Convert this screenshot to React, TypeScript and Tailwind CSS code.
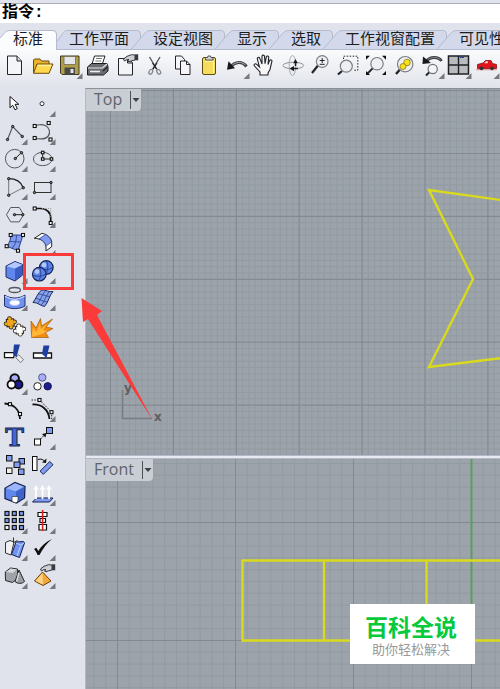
import { useState } from "react";
import type { ReactNode } from "react";

type Tool = {
  label: string;
  more?: boolean;
  icon: ReactNode;
};

const INK = "#222429";
const THIN = "#55585f";
const BLUE = "#7f9cf0";

const Node = ({ x, y, s = 3 }: { x: number; y: number; s?: number }) => (
  <rect
    x={x - s / 2}
    y={y - s / 2}
    width={s}
    height={s}
    fill="#fff"
    stroke="#111"
    strokeWidth="1.1"
  />
);

const Dot = ({ x, y }: { x: number; y: number }) => (
  <circle cx={x} cy={y} r="1.2" fill="#777" stroke="#111" strokeWidth="0.9" />
);

const Hand = () => (
  <>
    <path
      d="M12.5 8 16 5.3l4.5-1.6L24 4v5l-3.500.8-2.500 1-1.500-.8 1.500-1.300-2.200-.1-2.300 1.400Z"
      fill="#cfd0d4"
      stroke={INK}
      strokeWidth="0.9"
    />
    <path d="M24 3.300h3.200v6H24Z" fill="#3a3b40" />
  </>
);

const Puzzle = ({ x, y, fill }: { x: number; y: number; fill: string }) => {
  const knobs = [
    [-0.8, -4.2],
    [4.2, -1],
    [0.8, 4.2],
    [-4.2, 1],
  ];
  return (
    <g transform={`translate(${x} ${y})`}>
      {knobs.map(([kx, ky]) => (
        <circle key={kx} cx={kx} cy={ky} r="2.4" fill="#2b2416" />
      ))}
      <path d="M-4.6-3.700 3.700-4.600 4.600 3.700-3.700 4.600Z" fill="#2b2416" />
      {knobs.map(([kx, ky]) => (
        <circle key={kx} cx={kx} cy={ky} r="1.6" fill={fill} />
      ))}
      <path d="M-3.500-2.800 2.800-3.500 3.500 2.800-2.800 3.500Z" fill={fill} />
    </g>
  );
};

const mainTools: Tool[] = [
  {
    label: "新建",
    icon: (
      <>
        <path d="M7.5 5H17l4.5 5v13.5h-14Z" fill="#f4f5f7" stroke={INK} />
        <path d="M17 5v5h4.5" fill="#d5d6da" stroke={INK} />
      </>
    ),
  },
  {
    label: "打开",
    icon: (
      <>
        <path d="M5.5 22V9l1-1H12l1.5 2H21v3" fill="#e9b32a" stroke="#6b4d0c" />
        <path d="M5.5 22.3 9 13h16l-4 9.3Z" fill="#ffd84f" stroke="#6b4d0c" />
        <path d="M10 14.5h13" stroke="#fff0a8" strokeWidth="1.5" />
      </>
    ),
  },
  {
    label: "保存",
    more: true,
    icon: (
      <>
        <path d="M5.5 5H24v18.5H7L5.5 22Z" fill="#b09f48" stroke="#3d3924" />
        <path d="M9 5.5h11.5v8H9Z" fill="#e3e6ea" stroke="#6e6845" strokeWidth="0.8" />
        <path d="M9.5 16.5h10.5v7H9.5Z" fill="#4a4b48" />
        <path d="M15.5 18h3v4h-3Z" fill="#e4e5e8" />
      </>
    ),
  },
  {
    label: "打印",
    icon: (
      <>
        <path d="m9 13 2.500-8H22l-3 9" fill="#fff" stroke={INK} />
        <path d="M13 7.500h6M12.300 10h6" stroke="#777" />
        <path d="m4.500 16 4-3.500H24l1 3V20l-4.500 4h-16Z" fill="#6b6d72" stroke="#1c1d20" />
        <path d="M5 17h14.500l4.500-4" stroke="#e5e6e8" strokeWidth="1.2" />
        <path d="M7 20.500h10" stroke="#eee" strokeWidth="1.6" />
        <path d="m20 20 4.500-4" stroke="#222" strokeWidth="1.2" />
      </>
    ),
  },
  {
    label: "文件属性",
    icon: (
      <>
        <path d="M7.500 7.500h9l5 4v12.500h-14Z" fill="#f3f4f6" stroke={INK} />
        <path d="M21.500 12h-5V9" stroke={INK} />
        <Hand />
      </>
    ),
  },
  {
    label: "剪切",
    icon: (
      <>
        <path d="m10.500 6 7.500 12.500M21 6l-7.500 12.500" stroke={THIN} strokeWidth="1.4" />
        <path d="m13.500 12 4 6M18 12l-4 6" stroke={INK} strokeWidth="1.2" />
        <ellipse cx="11.800" cy="20.800" rx="1.700" ry="2.500" stroke="#85888e" strokeWidth="1.3" transform="rotate(30 11.8 20.8)" />
        <ellipse cx="19.700" cy="20.800" rx="1.700" ry="2.500" stroke="#85888e" strokeWidth="1.3" transform="rotate(-30 19.7 20.8)" />
      </>
    ),
  },
  {
    label: "复制",
    icon: (
      <>
        <path d="M8.500 5h6l3 3.500V18h-9Z" fill="#f6f6f8" stroke={INK} />
        <path d="M13.500 10h6l3.500 3.500v10h-9.500Z" fill="#f6f6f8" stroke={INK} />
        <path d="M19.500 10v3.500H23" stroke={INK} />
      </>
    ),
  },
  {
    label: "粘贴",
    icon: (
      <>
        <rect x="8.500" y="6.500" width="13" height="17" rx="1.5" fill="#f5dc5c" stroke="#5b4c14" />
        <path d="M11 10.500h8.500v11" stroke="#fff3a5" />
        <path d="M11.500 9V6.500h2L14 5h2.500l.5 1.500h2V9Z" fill="#d4d5d8" stroke="#45464a" strokeWidth="0.9" />
      </>
    ),
  },
  {
    label: "撤销",
    more: true,
    icon: (
      <>
        <path d="M9 15.500c4-4.800 11-6 15.500 0" stroke="#3d3f45" strokeWidth="3" />
        <path d="M10 14.500c4-3.800 9.500-4.300 13.500-.5" stroke="#a9acb2" strokeWidth="1" />
        <path d="m5 18.800 1.500-8.500 6.500 7Z" fill="#17181b" />
      </>
    ),
  },
  {
    label: "平移",
    icon: (
      <path
        d="M10 24v-3l-5.500-6c-1-1.500.5-3 2-1.800l3 2.800-2.200-8c-.3-1.800 2-2.200 2.500-.6L12 13V5.300c0-1.600 2.400-1.600 2.500 0l.5 7.400 1.300-6.800c.4-1.500 2.600-1 2.400.5l-.7 7.200 1.600-4c.6-1.400 2.700-.7 2.300.8L20 18.500 18 22v2Z"
        fill="#f7f7f8"
        stroke={INK}
        strokeWidth="1.1"
      />
    ),
  },
  {
    label: "旋转视图",
    icon: (
      <>
        <ellipse cx="15.300" cy="14.500" rx="10.300" ry="3.300" stroke="#8f9298" />
        <ellipse cx="14.500" cy="14.500" rx="3.300" ry="10" stroke="#a5a8ad" />
        <path d="m11.500 17.600 4.500-2.600v5.200ZM17.500 8l2.300 4.300h-4.600Z" fill="#17181b" />
        <path d="M16 17.600h4M17.500 12v3" stroke="#222" strokeWidth="1.5" />
      </>
    ),
  },
  {
    label: "动态缩放",
    icon: (
      <>
        <path d="m13 14.500-6 7.500" stroke={INK} strokeWidth="2.2" />
        <circle cx="17.200" cy="10.500" r="5.8" fill="#f0f1f3" stroke="#7b7e84" strokeWidth="1.2" />
        <path d="M14.700 9.500h5M17.200 7v5M14.700 13.300h5" stroke={INK} />
      </>
    ),
  },
  {
    label: "框选缩放",
    icon: (
      <>
        <path d="M10.500 8V5.200h14.300v14H20" stroke={INK} strokeDasharray="1.5 1.5" />
        <path d="m9 20-4 3.500" stroke={INK} strokeWidth="2.2" />
        <circle cx="13.300" cy="15.200" r="6" fill="#eeeff2" stroke="#7b7e84" strokeWidth="1.2" />
      </>
    ),
  },
  {
    label: "缩放至最大范围",
    icon: (
      <>
        <path d="m12 17-6 6" stroke={INK} strokeWidth="1.8" />
        <circle cx="16" cy="12.700" r="6.2" fill="#eeeff2" stroke="#7b7e84" strokeWidth="1.2" />
        <path d="M5 4.700h4l-4 4ZM25 4.700h-4l4 4ZM5 24v-4l4 4ZM25 24v-4l-4 4Z" fill="#111" />
      </>
    ),
  },
  {
    label: "缩放至选取物体",
    icon: (
      <>
        <path d="m11 18.500-4 4.500" stroke={INK} strokeWidth="2.4" />
        <circle cx="16.200" cy="13.200" r="7.7" fill="#eeeff2" stroke="#7b7e84" strokeWidth="1.2" />
        <circle cx="18" cy="11.500" r="3.3" fill="#f7e01c" stroke="#8b7a11" strokeWidth="0.8" />
        <circle cx="14" cy="15.500" r="3" fill="#f7e01c" stroke="#8b7a11" strokeWidth="0.8" />
      </>
    ),
  },
  {
    label: "复原视图",
    more: true,
    icon: (
      <>
        <path d="M9 10.500c4-5 12-5.500 15.500-.5" stroke="#3d3f45" strokeWidth="3" />
        <path d="M11 8.500c4-2.800 9-2.800 12.500 0" stroke="#85888e" />
        <path d="m5.500 13 .5-7.500 8 6.500Z" fill="#17181b" />
        <path d="m12.500 21-3.500 3.500" stroke={INK} strokeWidth="2" />
        <circle cx="15.700" cy="18" r="4.600" fill="#f4f4f6" stroke="#6e7177" strokeWidth="1.2" />
      </>
    ),
  },
  {
    label: "四个视图",
    more: true,
    icon: (
      <>
        <rect x="4.500" y="5" width="20" height="18" fill="#b9bbbf" stroke="#1f2024" strokeWidth="1.5" />
        <path d="M14.500 5v18M4.500 14h20" stroke="#1f2024" strokeWidth="1.4" />
        <path d="M16 6.500h4" stroke="#2f3fb5" />
      </>
    ),
  },
  {
    label: "着色",
    more: true,
    icon: (
      <>
        <path d="M4 18.800h21" stroke="#e59a9a" />
        <path d="M5.500 13.500 11 12l2.500-2.500H19l1.500 3 4 1v4l-19 .2Z" fill="#e0151b" stroke="#8d0d12" strokeWidth="0.8" />
        <path d="m12 12.300 2-2h1.800v2Z" fill="#f6d9d9" />
        <circle cx="9.500" cy="17.300" r="1.9" fill="#333" />
        <circle cx="20" cy="17.300" r="1.9" fill="#333" />
      </>
    ),
  },
];

const sideTools: Tool[] = [
  {
    label: "取消选取",
    icon: <path d="M10 7.500v11.300l2.700-2.500 2.300 4.500 2.300-1.200-2.200-4.300h3.700Z" fill="#fff" stroke="#111" />,
  },
  {
    label: "点",
    more: true,
    icon: <circle cx="14" cy="14.700" r="2" fill="#fff" stroke="#333" />,
  },
  {
    label: "多重直线",
    more: true,
    icon: (
      <>
        <path d="m7.500 22.500 5.200-13 9.600 10" stroke={THIN} strokeWidth="1.2" />
        <Dot x={7.5} y={22.5} />
        <Dot x={12.7} y={9.5} />
        <Dot x={22.3} y={19.5} />
      </>
    ),
  },
  {
    label: "控制点曲线",
    more: true,
    icon: (
      <>
        <path d="M6.700 9c2-1.200 7-2 10.500-.5 4.500 2 5.500 7.500 3 10.500-2.500 3-8 3.500-13.500 2" stroke={THIN} strokeWidth="1.2" />
        <Node x={6.7} y={9} />
        <Node x={20.7} y={6} />
        <Node x={6.7} y={21} />
        <Node x={22.5} y={22.5} />
      </>
    ),
  },
  {
    label: "圆",
    more: true,
    icon: (
      <>
        <circle cx="14.700" cy="14.700" r="9.3" stroke={THIN} />
        <path d="m15.300 14.500 6-5.800" stroke="#222" />
        <Dot x={15.3} y={14.5} />
        <Dot x={21.5} y={8.7} />
      </>
    ),
  },
  {
    label: "椭圆",
    more: true,
    icon: (
      <>
        <ellipse cx="14.700" cy="15" rx="9.300" ry="6.700" stroke={THIN} />
        <path d="M14.700 8.500V15h9" stroke="#222" />
        <Node x={14.7} y={8.5} s={2.5} />
        <Node x={14.7} y={15} s={2.5} />
        <Node x={23.5} y={15} s={2.5} />
      </>
    ),
  },
  {
    label: "圆弧",
    more: true,
    icon: (
      <>
        <path d="M8.700 6.700c7 0 12.300 3.300 14.600 9" stroke="#222" strokeWidth="1.3" />
        <path d="M8.700 6.700v16.600l14.600-7.600" stroke="#777" />
        <Dot x={8.7} y={6.7} />
        <Dot x={8.7} y={23.3} />
        <Dot x={23.3} y={15.7} />
      </>
    ),
  },
  {
    label: "矩形",
    more: true,
    icon: (
      <>
        <rect x="6.500" y="10.500" width="16.500" height="10" stroke="#333" />
        <Dot x={6.5} y={20.5} />
        <Dot x={23} y={10.5} />
      </>
    ),
  },
  {
    label: "多边形",
    more: true,
    icon: (
      <>
        <path d="m6.500 14.700 4.200-7.200h8.600l4.200 7.200-4.200 7.200h-8.600Z" stroke={THIN} />
        <path d="M15 14.700h8" stroke="#222" />
        <Dot x={14.5} y={14.7} />
        <Dot x={22.8} y={14.7} />
      </>
    ),
  },
  {
    label: "曲线圆角",
    more: true,
    icon: (
      <>
        <path d="M6.700 8.500h5.800c6 0 10.200 4 10.200 9.500v5" stroke="#111" strokeWidth="1.7" />
        <path d="M14 8.500h8.700V17" stroke="#999" strokeDasharray="1 1" />
        <Node x={6.7} y={8.5} />
        <Node x={22.7} y={23} />
      </>
    ),
  },
  {
    label: "曲面",
    icon: (
      <>
        <path d="M10.700 7H23l-5 15.700-11.300-4.500C9.500 15 11 11 10.700 7Z" fill={BLUE} stroke="#2f3f86" />
        <path d="M16.500 7c0 5-1 9.500-4 13M9.500 13.500l11.500.5" stroke="#3b4f9e" />
        <Node x={10.7} y={7} />
        <Node x={23} y={7} />
        <Node x={6.7} y={18.2} />
        <Node x={18} y={22.7} />
      </>
    ),
  },
  {
    label: "放样",
    more: true,
    icon: (
      <>
        <path d="m6.300 10.300 7.700-5c5 1 9 4 9.700 8.700v4.700L18 23v-4c-.5-5.500-5-8.500-11.700-8.700Z" fill="#fff" stroke="#222" />
        <path d="m11 10.800 6.500-4.300c3 1.500 5.300 4 6 7.500L18 18c-.8-3.500-3.500-6-7-7.200Z" fill={BLUE} stroke="#2f3f86" strokeWidth="0.7" />
      </>
    ),
  },
  {
    label: "立方体",
    more: true,
    icon: (
      <>
        <path d="m6 10 9-4.500 7.700 3V19L15 25l-9-4Z" fill="#5f86ea" stroke="#1d2b66" />
        <path d="m6.500 10.200 8.700-4.200 7 2.700-7.200 3.800Z" fill="#b5c7ff" />
        <path d="m15 12.800 7.300-3.900v9.900L15 24.400Z" fill="#3a5cc4" />
      </>
    ),
  },
  {
    label: "球体",
    more: true,
    icon: (
      <>
        <circle cx="18.300" cy="11.500" r="6.800" fill="#5b82e8" stroke="#152352" strokeWidth="1.2" />
        <path d="M11.700 12.700c4 1.600 9 1.300 13-1M18.500 5c2 4 1.500 9-.5 13" stroke="#22367c" strokeWidth="0.800" />
        <circle cx="16" cy="9" r="2.400" fill="#b4c8ff" />
        <circle cx="11.300" cy="18.200" r="6.800" fill="#5b82e8" stroke="#152352" strokeWidth="1.2" />
        <path d="M4.700 19.300c4 1.600 9 1.300 13-1M11.500 11.700c2 4 1.500 9-.5 13" stroke="#22367c" strokeWidth="0.800" />
        <circle cx="9" cy="15.700" r="2.400" fill="#b4c8ff" />
      </>
    ),
  },
  {
    label: "从曲面偏移",
    more: true,
    icon: (
      <>
        <ellipse cx="14.700" cy="7" rx="5.700" ry="2.500" stroke={THIN} strokeWidth="1.3" />
        <path d="M4.500 12c6 4 14.500 4 20.500 0v11c-6 3.500-14.500 3.500-20.500 0Z" fill="#6f92ee" stroke="#23336f" />
        <path d="M5 13.300c6 3.700 13.500 3.700 19.500 0" stroke="#c3d2ff" strokeWidth="1.3" />
        <ellipse cx="14.700" cy="19.700" rx="5" ry="2.700" fill="#fff" stroke="#b7c6fb" />
      </>
    ),
  },
  {
    label: "网格",
    more: true,
    icon: (
      <>
        <path d="M5 19.500c3-4 4.500-9 8.500-12.500 4-.5 7.500 2.500 11.500 1.500-4 4-4.500 11-8.500 15-4-.5-7-4.500-11.500-4Z" fill="#86a3f0" stroke="#1e2c66" />
        <path d="M17.500 7.800c-3.500 4-5 9.500-8 13M21 9c-3.500 4-4.500 10-8 13.500M7.700 15.500c4 0 7 3.500 11.300 3.500M10.500 11c4 0 7 2.500 11.500 2.500" stroke="#2c3d80" strokeWidth="0.800" />
      </>
    ),
  },
  {
    label: "组合",
    icon: (
      <>
        <Puzzle x={19.5} y={19} fill="#fff" />
        <Puzzle x={10.3} y={11.8} fill="#f2a71b" />
      </>
    ),
  },
  {
    label: "炸开",
    icon: (
      <>
        <path d="M3.500 26.500 3 10l5 7 4.500-9.500L13.500 15 24.500 8 18 16l7 1.500-7.500 4 3 5Z" fill="#f08c12" stroke="#a35c06" strokeWidth="0.7" />
        <path d="m3.500 26 1.500-9.500L8.500 21l3.500-9.500.8 6.500 7-5.500-5 6.500 4.500 1-5 3Z" fill="#ffb63a" />
      </>
    ),
  },
  {
    label: "修剪",
    icon: (
      <>
        <path d="M4.500 13.700H15l-1.500 5h-9Z" fill="#fff" stroke="#111" strokeWidth="1.3" />
        <path d="m15.700 18.500 3-2.700 4.800 5-3 2.700Z" fill="#eee" stroke="#777" />
        <path d="M14 5.500h6l-3.500 12.800-3.500-3Z" fill="#1f3f9e" />
      </>
    ),
  },
  {
    label: "分割",
    icon: (
      <>
        <path d="M5.500 14h18v5h-18Z" fill="#fff" stroke="#111" strokeWidth="1.3" />
        <path d="M15.500 6.500h6L18.500 19 14 15Z" fill="#1f3f9e" />
      </>
    ),
  },
  {
    label: "群组",
    more: true,
    icon: (
      <>
        <circle cx="14.700" cy="11.500" r="4.200" fill="#a9acf6" stroke="#0c0c12" strokeWidth="2" />
        <circle cx="18.500" cy="17.500" r="4" fill="#1d1d8e" stroke="#0c0c12" strokeWidth="1.8" />
        <circle cx="11.500" cy="17.500" r="4" fill="#fff" stroke="#0c0c12" strokeWidth="1.8" />
      </>
    ),
  },
  {
    label: "解散群组",
    icon: (
      <>
        <circle cx="14.300" cy="10.500" r="3.700" fill="#a9acf6" stroke="#555a8c" />
        <circle cx="9.500" cy="19.300" r="3.700" fill="#fff" stroke="#222" />
        <circle cx="19.700" cy="19.300" r="3.700" fill="#1d1d8e" stroke="#15155c" />
      </>
    ),
  },
  {
    label: "编辑点",
    icon: (
      <>
        <path d="M4.500 9.500c9 .5 15 6 15.500 15.500" stroke="#111" strokeWidth="1.8" />
        <Node x={10} y={10.2} />
        <Node x={20} y={20} />
      </>
    ),
  },
  {
    label: "控制点",
    more: true,
    icon: (
      <>
        <path d="M4.500 10.500c9-.5 16 5 17 14.500" stroke="#111" strokeWidth="1.8" />
        <path d="M3.500 6h8l12.200 12.200V25" stroke="#222" strokeDasharray="1.5 1.3" />
        <Node x={11.5} y={6} />
        <Node x={23.5} y={18.2} />
      </>
    ),
  },
  {
    label: "文字",
    icon: (
      <text
        x="14.500"
        y="24"
        textAnchor="middle"
        fill="#4169d8"
        stroke="#1a2550"
        strokeWidth="1"
        className="font-['DejaVu_Serif',serif] text-[25px] font-bold"
      >
        T
      </text>
    ),
  },
  {
    label: "移动",
    more: true,
    icon: (
      <>
        <path d="m12.500 17 4-4" stroke="#111" strokeDasharray="2 1" />
        <path d="m18.500 11-1 4.500-3.500-3.500Z" fill="#111" />
        <rect x="18.500" y="5.500" width="6" height="6" fill={BLUE} stroke="#111" />
        <rect x="6.500" y="17" width="6" height="6" fill="#fff" stroke="#111" />
      </>
    ),
  },
  {
    label: "复制物件",
    icon: (
      <>
        <rect x="6.500" y="5.500" width="5.5" height="5.5" fill={BLUE} stroke="#111" />
        <rect x="19" y="8.500" width="5.5" height="5.5" fill={BLUE} stroke="#111" />
        <rect x="14" y="12" width="6" height="5.5" fill={BLUE} stroke="#111" />
        <rect x="6.500" y="18" width="5.5" height="5.5" fill="#f1efe6" stroke="#111" />
        <rect x="18.500" y="19" width="5.5" height="5.5" fill={BLUE} stroke="#111" />
      </>
    ),
  },
  {
    label: "旋转",
    icon: (
      <>
        <rect x="4.500" y="6.500" width="4.5" height="14" fill="#fff" stroke="#111" />
        <path d="M10 9.500c3-1 5 0 7 2" stroke="#111" />
        <path d="m18.500 8.500-.5 4.500-4-.5Z" fill="#111" />
        <path d="m21.800 11.500 3.200 3.200-9.700 9.700-3.300-3.200Z" fill={BLUE} stroke="#1c2756" />
      </>
    ),
  },
  {
    label: "布尔运算",
    more: true,
    icon: (
      <>
        <path d="M5 10.300 15 4.500l10 4-.5 11.500-8 5L5 20.500Z" fill="#5f87ec" stroke="#14204f" strokeWidth="1.3" />
        <path d="m6 10.300 9-5 8.800 3.500-8.300 4.500Z" fill="#9db6fa" />
        <path d="m15.800 13.700 8.400-4.600-.4 10.400-7.300 4.500Z" fill="#3e63c9" />
        <path d="M12 18.500h6V23l-2 2-4-1.500Z" fill="#fff" stroke="#333" strokeWidth="0.7" />
      </>
    ),
  },
  {
    label: "投影",
    more: true,
    icon: (
      <>
        <path d="m4.500 24 4-4H25l-3.500 4Z" fill={BLUE} stroke="#14204f" />
        <path d="M8 9v12M14.500 9v12M21 9v12" stroke="#fff" strokeWidth="1.7" />
        <path d="m8 7-2.700 4.500h5.400ZM14.500 7l-2.700 4.500h5.400ZM21 7l-2.700 4.500h5.400Z" fill="#fff" />
      </>
    ),
  },
  {
    label: "阵列",
    more: true,
    icon: (
      <>
        {[7, 14.3, 21.5].map((x) =>
          [7.5, 14.5, 21.5].map((y) => (
            <rect
              key={`${x}-${y}`}
              x={x - 2}
              y={y - 2}
              width="4"
              height="4"
              fill={x === 7 && y === 21.5 ? "#fff" : BLUE}
              stroke="#111"
              strokeWidth="1.2"
            />
          ))
        )}
      </>
    ),
  },
  {
    label: "对齐",
    more: true,
    icon: (
      <>
        <path d="M10 6.500h9v4h-9ZM12 12.500h5.500v4H12ZM11 18.500h7.500V24H11Z" fill="#fff" stroke="#111" strokeWidth="1.2" />
        <path d="M14.600 4v21" stroke="#e01c1c" strokeWidth="1.6" />
      </>
    ),
  },
  {
    label: "变形",
    more: true,
    icon: (
      <>
        <path d="m5.500 9.500 4.500-2 4 1.500-3 13-5.500-2Z" fill="#f0f0f2" stroke="#333" />
        <path d="M13.500 4.500v5l4-2" stroke="#333" />
        <path d="m16 9 7.500-.5 1 1.500-5 14.500-8-3Z" fill="#6f93f0" stroke="#14204f" />
        <path d="m16 10 5 2 3-2M20.700 12.500 17 23" stroke="#c4d2ff" />
      </>
    ),
  },
  {
    label: "检查",
    more: true,
    icon: (
      <path d="m6 16 2.300-1.300 2 3.300C13.500 13 18 8.500 24 6c-5 4-9 9.500-12.500 16h-2C8.700 19.500 7.500 17.500 6 16Z" fill="#111" />
    ),
  },
  {
    label: "着色显示",
    more: true,
    icon: (
      <>
        <path d="m5.300 11 5.200-4 7 1 .5 9-5.500 4.500-7-2Z" fill="#9fa2a8" stroke="#26272b" />
        <path d="m5.800 11 5-3.500 6.200 1-4.500 3.500Z" fill="#d6d8db" />
        <path d="m19 9 5.500 11.500c-2.500 2.500-7 2.500-9.500 0Z" fill="#9b9ea4" stroke="#26272b" />
        <path d="m18.700 12-2 8.500" stroke="#e3e4e6" strokeWidth="1.2" />
      </>
    ),
  },
  {
    label: "物件属性",
    more: true,
    icon: (
      <>
        <path d="m6.500 20 8-9 8.500 9-8 4.500Z" fill="#f2a83a" stroke="#6b4007" />
        <path d="m7.500 20 7-8 .5 11.500Z" fill="#ffd383" />
        <Hand />
      </>
    ),
  },
];

const tabs = ["标准", "工作平面", "设定视图", "显示", "选取", "工作视窗配置", "可见性"];

function ToolButton({ tool, className }: { tool: Tool; className: string }) {
  return (
    <button
      type="button"
      aria-label={tool.label}
      className={`flex items-center justify-center hover:bg-white/60 ${className}`}
    >
      <svg width="28" height="28" viewBox="0 0 28 28" fill="none" className="shrink-0">
        {tool.icon}
        {tool.more && <path d="M27.500 22v6h-6Z" fill="#77797e" />}
      </svg>
    </button>
  );
}

function CommandBar() {
  const [command, setCommand] = useState("");

  return (
    <div className="mt-[3px] flex h-5 items-center border-t border-[#a9acb5] bg-white pb-px pl-[2px] font-['Liberation_Mono','Noto_Sans_CJK_SC',monospace] text-base leading-4 text-black">
      <label htmlFor="command" className="font-bold">
        指令:
      </label>
      <input
        id="command"
        value={command}
        onChange={(e) => setCommand(e.target.value)}
        className="min-w-0 flex-1 bg-transparent outline-none"
      />
    </div>
  );
}

function TabEdge({ first }: { first: boolean }) {
  if (first) {
    return (
      <svg width="26" height="20" className="shrink-0" fill="none">
        <path d="M0 1h10q3 0 3 3v16H0Z" fill="#fbfcfd" />
        <path d="M13.500 20v-8l6-8.500Q21 1 24 1h2v19Z" fill="#d3d9ea" />
        <path d="M0 .5h10q3.500 0 3.500 3.500v16M13.500 12l6-8.500Q21 .5 24 .5h2" stroke="#b4bbcf" />
        <path d="M13.500 19.500H26" stroke="#b4bbcf" />
      </svg>
    );
  }
  return (
    <svg width="24" height="20" className="shrink-0" fill="none">
      <path d="M0 1h8q3.500 0 3.500 3v5L2 20H0Z" fill="#d3d9ea" />
      <path d="M2 20 15.500 3.500Q17.500 1 21 1h3v19Z" fill="#d3d9ea" />
      <path d="M0 .5h8q3.500 0 3.500 3.500v4M1.500 20l14-16.500Q18 .5 21 .5h3" stroke="#b4bbcf" />
      <path d="M0 19.500h24" stroke="#b4bbcf" />
    </svg>
  );
}

function TabBar() {
  const [active, setActive] = useState(0);

  return (
    <div role="tablist" className="mt-[7px] flex h-5 overflow-hidden">
      <svg width="13" height="20" className="shrink-0" fill="none">
        <path d="M0 8 5 2.500Q6.500 1 9 1h4v19H0Z" fill="#fbfcfd" />
        <path d="m0 8 5-5.500Q6.500.5 9 .5h4" stroke="#b4bbcf" />
      </svg>
      {tabs.map((tab, i) => (
        <div key={tab} className="flex shrink-0">
          <button
            type="button"
            role="tab"
            aria-selected={active === i}
            onClick={() => setActive(i)}
            className={`flex h-5 items-start border-t border-[#b4bbcf] text-[15px] leading-[14px] whitespace-nowrap text-[#1c1d20] ${
              i === 0 ? "bg-[#fbfcfd]" : "border-b bg-[#d3d9ea]"
            }`}
          >
            {tab}
          </button>
          <TabEdge first={i === 0} />
        </div>
      ))}
    </div>
  );
}

// grid lines repeat far enough to cover wide windows
function gridPath(origin: number[], step: number, extent = 3000) {
  let d = "";
  for (let x = origin[0] % step; x < extent; x += step) d += `M${x.toFixed(1)} 0V${extent}`;
  for (let y = origin[1] % step; y < extent; y += step) d += `M0 ${y.toFixed(1)}H${extent}`;
  return d;
}

type ViewportProps = {
  name: string;
  origin: number[];
  step: number;
  className: string;
  children: ReactNode;
};

function Viewport({ name, origin, step, className, children }: ViewportProps) {
  return (
    <section aria-label={name} className={`relative overflow-hidden bg-[#9ca3aa] ${className}`}>
      <svg className="absolute inset-0 h-full w-full" fill="none">
        <path d={gridPath(origin, step / 10)} stroke="#939ba2" strokeWidth="1" />
        <path d={gridPath(origin, step)} stroke="#858891" strokeWidth="1" />
        {children}
      </svg>
      <button
        type="button"
        className="absolute top-0 left-0 flex h-[22px] items-center rounded-br bg-[#c9cdd4] pl-2 font-['Open_Sans','Noto_Sans',sans-serif] text-base leading-5 text-[#5f646b]"
      >
        <span className="pb-[2px]">{name}</span>
        <span className="ml-2 h-[18px] w-px bg-[#4c4f55]" />
        <svg width="10" height="6" className="shrink-0">
          <path d="M1.500 1h7L5 5Z" fill="#3e4147" />
        </svg>
      </button>
    </section>
  );
}

export default function App() {
  return (
    <div className="relative flex min-h-screen flex-col overflow-hidden bg-[#e0e3eb] font-['Noto_Sans_CJK_SC',sans-serif]">
      <CommandBar />
      <TabBar />

      <div
        role="toolbar"
        aria-label="标准"
        className="flex h-[38px] bg-linear-to-b from-[#fafbfc] to-[#e0e3eb] pt-px"
      >
        {mainTools.map((tool) => (
          <ToolButton key={tool.label} tool={tool} className="h-7 min-w-0 shrink basis-7" />
        ))}
      </div>

      <main className="flex flex-1">
        <aside className="w-[85px] shrink-0 pt-px">
          <div className="grid h-[500px] w-14 auto-rows-fr grid-cols-2">
            {sideTools.map((tool) => (
              <ToolButton key={tool.label} tool={tool} className="min-h-0" />
            ))}
          </div>
        </aside>

        <div className="flex min-w-0 flex-1 flex-col border-t border-l border-t-[#8c909a] border-l-[#b3b9c6]">
          <Viewport name="Top" origin={[24.5, 64.5]} step={62.9} className="flex-[366]">
            <path d="M36.500 301v28.500H66" stroke="#7b7d82" strokeWidth="1.5" />
            <text x="38" y="303" fill="#5c5e63" className="font-['DejaVu_Sans',sans-serif] text-[12px] font-bold">
              y
            </text>
            <text x="68" y="332" fill="#5c5e63" className="font-['DejaVu_Sans',sans-serif] text-[12px] font-bold">
              x
            </text>
            <path d="m480 120-137-19 44 89-44 88 137-17" stroke="#d9da1c" strokeWidth="2.4" />
          </Viewport>

          <div className="h-1 border-y border-[#b4b8c8] bg-[#e8eaf2]" />

          <Viewport name="Front" origin={[31.5, 63.5]} step={118} className="flex-[230]">
            <path d="M385.500 0v181" stroke="#5a9c62" strokeWidth="2" />
            <path
              d="M155.500 101.500h1000M155.500 181.500h1000M156.500 101v81M238 101v81M340.500 101v81"
              stroke="#d9da1c"
              strokeWidth="2.4"
            />
          </Viewport>
        </div>
      </main>

      <svg className="pointer-events-none absolute inset-0 h-full w-full" fill="none">
        <rect x="24.500" y="254.500" width="48" height="34" stroke="#fb3a3a" strokeWidth="3" />
        <path d="m81.500 298 20.500 13-5 4 55.500 105L88 319l-5 3Z" fill="#fb3a3a" />
      </svg>

      <div className="absolute right-[25px] bottom-[25px] flex h-[60px] w-[125px] flex-col items-center justify-center bg-white pt-1 pr-[3px]">
        <p className="text-[23px] leading-[26px] font-bold text-[#06c93c]">百科全说</p>
        <p className="text-[13px] leading-5 text-[#999]">助你轻松解决</p>
      </div>
    </div>
  );
}
